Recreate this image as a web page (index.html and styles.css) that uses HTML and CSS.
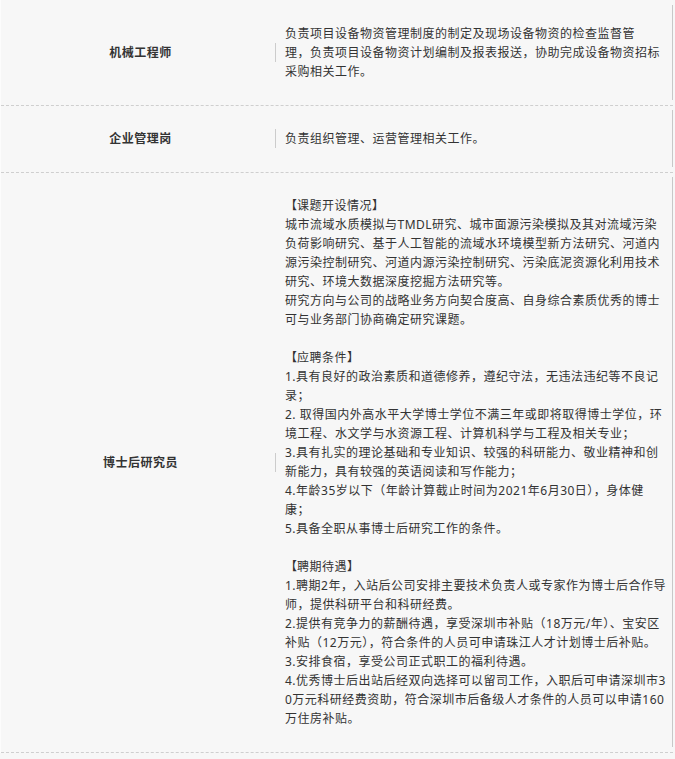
FILE: index.html
```html
<!DOCTYPE html>
<html lang="zh-CN">
<head>
<meta charset="utf-8">
<title>招聘岗位</title>
<link rel="stylesheet" href="styles.css">
</head>
<body>
<div class="table">
  <div class="row">
    <div class="inner">
      <div class="name"><span class="title">机械工程师</span><span class="sep"></span></div>
      <div class="desc">负责项目设备物资管理制度的制定及现场设备物资的检查监督管<br>理，负责项目设备物资计划编制及报表报送，协助完成设备物资招标<br>采购相关工作。</div>
    </div>
  </div>
  <div class="row">
    <div class="inner">
      <div class="name"><span class="title">企业管理岗</span><span class="sep"></span></div>
      <div class="desc">负责组织管理、运营管理相关工作。</div>
    </div>
  </div>
  <div class="row">
    <div class="inner">
      <div class="name"><span class="title">博士后研究员</span><span class="sep"></span></div>
      <div class="desc"><span class="br">【</span>课题开设情况】<br>城市流域水质模拟与TMDL研究、城市面源污染模拟及其对流域污染<br>负荷影响研究、基于人工智能的流域水环境模型新方法研究、河道内<br>源污染控制研究、河道内源污染控制研究、污染底泥资源化利用技术<br>研究、环境大数据深度挖掘方法研究等。<br>研究方向与公司的战略业务方向契合度高、自身综合素质优秀的博士<br>可与业务部门协商确定研究课题。<br><br><span class="br">【</span>应聘条件】<br>1.具有良好的政治素质和道德修养，遵纪守法，无违法违纪等不良记<br>录；<br>2. 取得国内外高水平大学博士学位不满三年或即将取得博士学位，环<br>境工程、水文学与水资源工程、计算机科学与工程及相关专业；<br>3.具有扎实的理论基础和专业知识、较强的科研能力、敬业精神和创<br>新能力，具有较强的英语阅读和写作能力；<br>4.年龄35岁以下（年龄计算截止时间为2021年6月30日），身体健<br>康；<br>5.具备全职从事博士后研究工作的条件。<br><br><span class="br">【</span>聘期待遇】<br>1.聘期2年，入站后公司安排主要技术负责人或专家作为博士后合作导<br>师，提供科研平台和科研经费。<br>2.提供有竞争力的薪酬待遇，享受深圳市补贴（18万元/年）、宝安区<br>补贴（12万元），符合条件的人员可申请珠江人才计划博士后补贴。<br>3.安排食宿，享受公司正式职工的福利待遇。<br>4.优秀博士后出站后经双向选择可以留司工作，入职后可申请深圳市3<br>0万元科研经费资助，符合深圳市后备级人才条件的人员可以申请160<br>万住房补贴。</div>
    </div>
  </div>
</div>
</body>
</html>
```

FILE: styles.css
```css
html, body {
  margin: 0;
  padding: 0;
  background: #f7f7f7;
}
body {
  font-family: "Noto Sans", "Noto Sans CJK SC", "Microsoft YaHei", sans-serif;
  font-size: 12px;
  letter-spacing: 0.5px;
  color: #333;
}
.table {
  width: 673px;
  border-left: 1px solid #fcfcfc;
  box-sizing: border-box;
}
.row {
  padding: 5px 0 5px 0;
  border-bottom: 1px dashed #cfcfcf;
}
.row + .row {
  padding-top: 4px;
}
.inner {
  display: flex;
  border-right: 1px solid #c8c8c8;
  padding: 19px 0;
}
.name {
  width: 275px;
  flex: none;
  display: flex;
  align-items: center;
}
.title {
  flex: 1;
  text-align: center;
  padding-left: 5px;
  font-weight: bold;
  color: #333;
  line-height: 19px;
}
.sep {
  width: 1px;
  height: 19px;
  background: #cccccc;
}
.desc {
  margin-left: 9px;
  line-height: 19px;
  white-space: nowrap;
}
.br {
  display: inline-block;
  width: 12px;
  text-align: right;
  letter-spacing: 0;
}
```
